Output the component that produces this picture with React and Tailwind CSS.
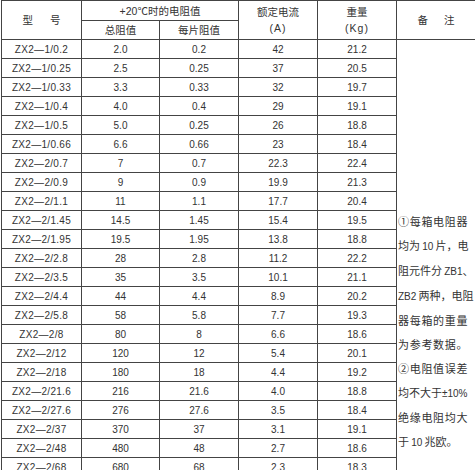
const rows = [
  ['ZX2—1/0.2', '2.0', '0.2', '42', '21.2'],
  ['ZX2—1/0.25', '2.5', '0.25', '37', '20.5'],
  ['ZX2—1/0.33', '3.3', '0.33', '32', '19.7'],
  ['ZX2—1/0.4', '4.0', '0.4', '29', '19.1'],
  ['ZX2—1/0.5', '5.0', '0.25', '26', '18.8'],
  ['ZX2—1/0.66', '6.6', '0.66', '23', '18.4'],
  ['ZX2—2/0.7', '7', '0.7', '22.3', '22.4'],
  ['ZX2—2/0.9', '9', '0.9', '19.9', '21.3'],
  ['ZX2—2/1.1', '11', '1.1', '17.7', '20.4'],
  ['ZX2—2/1.45', '14.5', '1.45', '15.4', '19.5'],
  ['ZX2—2/1.95', '19.5', '1.95', '13.8', '18.8'],
  ['ZX2—2/2.8', '28', '2.8', '11.2', '22.2'],
  ['ZX2—2/3.5', '35', '3.5', '10.1', '21.1'],
  ['ZX2—2/4.4', '44', '4.4', '8.9', '20.2'],
  ['ZX2—2/5.8', '58', '5.8', '7.7', '19.3'],
  ['ZX2—2/8', '80', '8', '6.6', '18.6'],
  ['ZX2—2/12', '120', '12', '5.4', '20.1'],
  ['ZX2—2/18', '180', '18', '4.4', '19.2'],
  ['ZX2—2/21.6', '216', '21.6', '4.0', '18.8'],
  ['ZX2—2/27.6', '276', '27.6', '3.5', '18.4'],
  ['ZX2—2/37', '370', '37', '3.1', '19.1'],
  ['ZX2—2/48', '480', '48', '2.7', '18.6'],
  ['ZX2—2/68', '680', '68', '2.3', '18.3'],
];

const cell = 'border border-[#444] p-0 text-center align-middle';

// small latin bits inside the notes column
const L = ({ children }) => <span className="text-[10px] tracking-normal">{children}</span>;

function Notes() {
  return (
    <div className="whitespace-nowrap text-[11px] leading-[24px]">
      <div className="tracking-[0.7px]">①每箱电阻器</div>
      <div>均为{'\u2009'}<L>10</L>{'\u2009'}片，电</div>
      <div>阻元件分{'\u2009'}<L>ZB1</L>、</div>
      <div><L>ZB2</L>{'\u2009'}两种，电阻</div>
      <div className="tracking-[0.7px]">器每箱的重量</div>
      <div className="tracking-[0.7px]">为参考数据。</div>
      <div className="tracking-[0.7px]">②电阻值误差</div>
      <div>均不大于<L>±10%</L></div>
      <div className="tracking-[0.7px]">绝缘电阻均大</div>
      <div>于{'\u2009'}<L>10</L>{'\u2009'}兆欧。</div>
    </div>
  );
}

export default function App() {
  return (
    <div className="min-h-[470px] bg-white pl-px text-[#333] font-['Liberation_Sans','Noto_Sans_CJK_SC',sans-serif]">
      <table className="w-[474px] table-fixed border-collapse">
        <colgroup>
          <col className="w-[80px]" />
          <col className="w-[78px]" />
          <col className="w-[79px]" />
          <col className="w-[79px]" />
          <col className="w-[79px]" />
          <col className="w-[79px]" />
        </colgroup>
        <thead className="text-[10.5px] leading-4">
          <tr className="h-[20px]">
            <th rowSpan={2} className={`${cell} font-normal`}>
              <span className="mr-[17px]">型</span>号
            </th>
            <th colSpan={2} className={`${cell} font-normal`}>+20℃时的电阻值</th>
            <th rowSpan={2} className={`${cell} font-normal`}>
              <div>额定电流</div>
              <div className="tracking-[1px]">(A)</div>
            </th>
            <th rowSpan={2} className={`${cell} font-normal`}>
              <div>重量</div>
              <div className="tracking-[1px]">(Kg)</div>
            </th>
            <th rowSpan={2} className={`${cell} font-normal`}>
              <span className="mr-[16px]">备</span>注
            </th>
          </tr>
          <tr className="h-[19px]">
            <th className={`${cell} font-normal`}>总阻值</th>
            <th className={`${cell} font-normal`}>每片阻值</th>
          </tr>
        </thead>
        <tbody className="text-[10px]">
          {rows.map((r, i) => (
            <tr key={r[0]} className="h-[19px]">
              {r.map((v, j) => (
                <td key={j} className={`${cell} ${j === 0 ? 'tracking-[0.3px]' : ''}`}>{v}</td>
              ))}
              {i === 0 && (
                <td rowSpan={rows.length} className="border border-[#444] p-0 pl-px pt-[170px] align-top text-left">
                  <Notes />
                </td>
              )}
            </tr>
          ))}
        </tbody>
      </table>
    </div>
  );
}
